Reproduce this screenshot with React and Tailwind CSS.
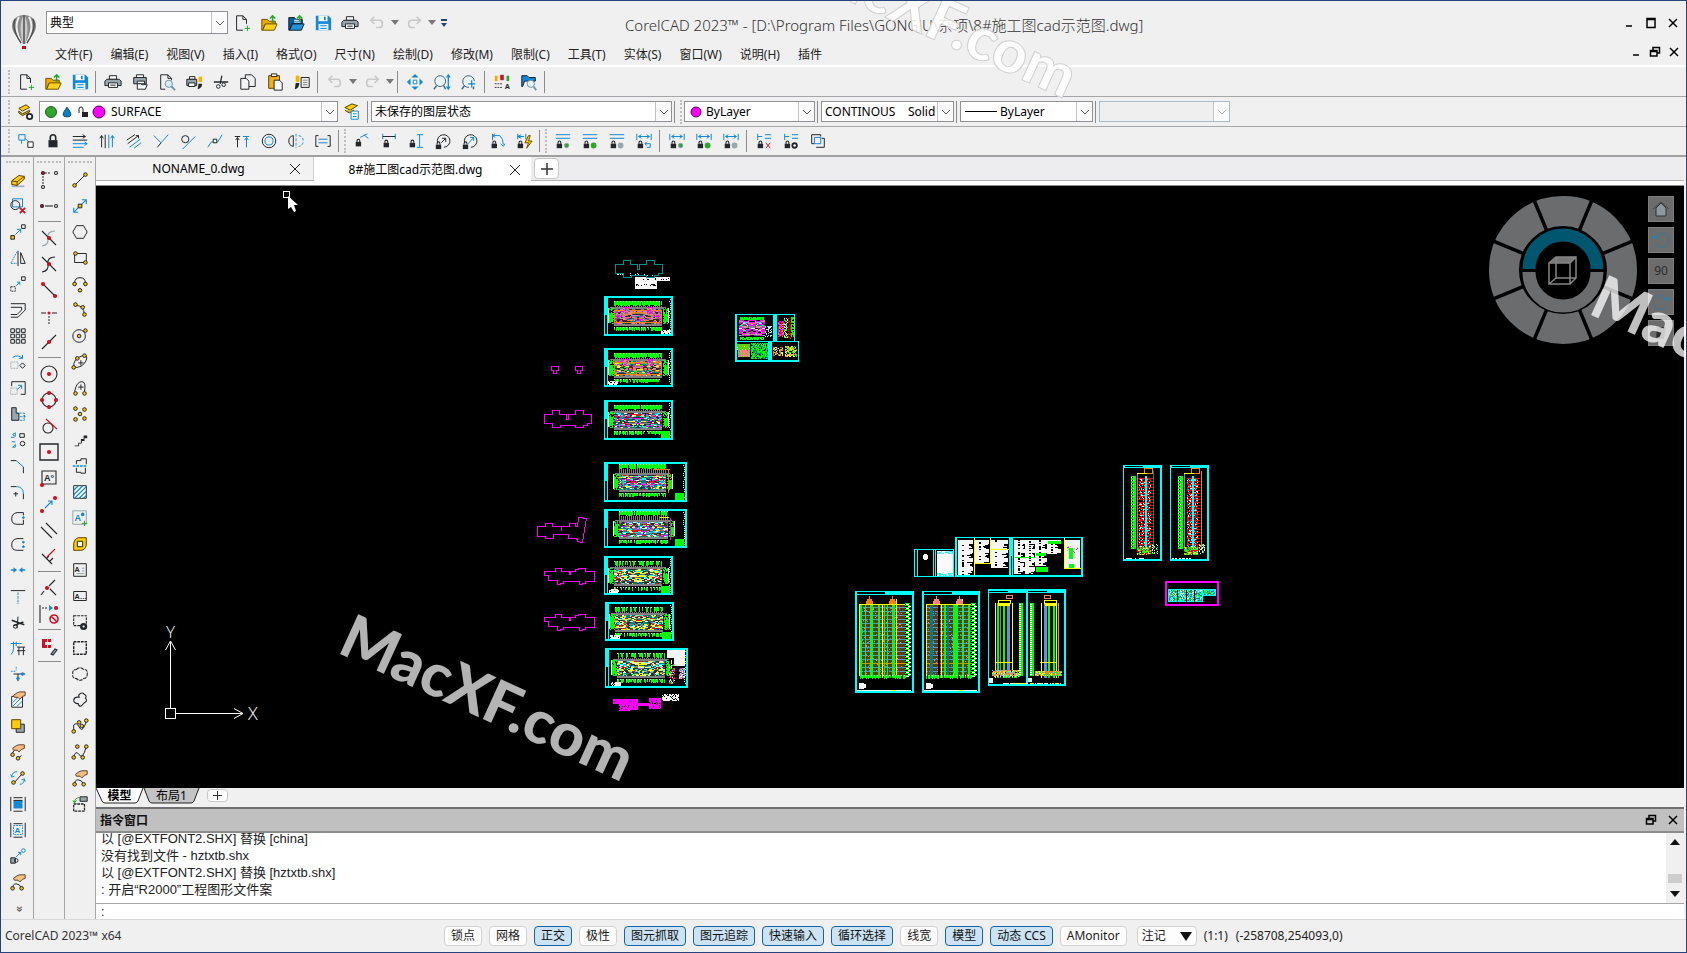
import React from "react";

const K = "#23272b";
const B = "#1488d8";
const Y = "#f7c600";
const G = "#2ea52f";
const R = "#d01224";
const S = "#98a6ae";
const D = "#c9c9c9";

const circ = (x, y, r) => `M${x - r} ${y}a${r} ${r} 0 1 0 ${2 * r} 0a${r} ${r} 0 1 0 ${-2 * r} 0z`;
const rect = (x, y, w, h) => `M${x} ${y}h${w}v${h}h${-w}z`;
const dot = (x, y) => [K, circ(x, y, 2), Y];
const red = (x, y) => [R, circ(x, y, 1.5), R];
const lock = (x, y) => [
  ["none", rect(x, y + 3, 6, 5), K],
  [K, `M${x + 1.5} ${y + 3}v-1.500q0-1.500 1.500-1.500t1.500 1.500v1.500`, 0, 1.2],
];
const hand = (x, y) => ["#5b4530", `M${x} ${y + 4}l4-3 3-1h6v4l-3 1-3 3-2-2h-4z`, "#f3bd84"];

/* Each stroke: [stroke, path, fill, width, dash]; a { t } entry is a letter. */
const ICONS = {
  new: [[K, "M11 18H4V2h7l4 4v5M11 2v4h4"], [G, "M16 13v6M13 16h6"]],
  open: [["#6b5200", "M2 6h6l2 2h7v4H5l-2 6H2z", "#f0a800"], ["#6b5200", "M6 11h13l-3 7H3z", "#ffd21f"], [G, "M14 10V2M11 5l3-3 3 3", 0, 1.800]],
  openBlue: [["#123", "M2 4h6l2 2h7v5H5l-2 7H2z", "#0a5fa0"], ["#fff", "M8 7h7M8 9h7"], ["#123", "M6 11h13l-3 7H3z", "#1c95dc"], [G, "M14 9V2M11 5l3-3 3 3", 0, 1.800]],
  save: [["none", "M2 2h14l3 3v13H2z", B], ["none", rect(5, 2, 10, 6), "#fff"], ["none", rect(11, 3, 2, 4), B], ["none", rect(5, 11, 11, 7), "#e6f3fb"], [B, "M7 13h7M7 16h7"]],
  print: [[K, rect(6, 3, 8, 4), "#fff"], [K, "M3 7h14l2 2v5H1V9z", S], [K, rect(5, 11, 10, 5), "#fff"], [K, "M7 13.500h6"]],
  printSet: [[K, rect(6, 2, 8, 3), "#fff"], [K, "M3 5h14v7H3z", S], [K, "M7 9h8v3H7z", "#fff"], [K, "M7 12h4l1 1h6l-2 5H7z", "#fff"]],
  preview: [[K, "M8 18H3V2h8l4 4v2M11 2v4h4"], ["#7192a8", circ(12, 12, 4), "#d9edf8"], ["#7192a8", "M15 15l4 4", 0, 2]],
  printBrush: [[K, rect(5, 4, 6, 3), "#fff"], [K, "M2 7h11v7H2z", S], [K, rect(4, 11, 7, 4), "#fff"], ["none", rect(15, 4, 4, 6), "#f7b500"], ["none", "M15 12h4q0 5-5 6z", K]],
  cut: [[K, "M2 10h16M11 3l-2 9", 0, 1.400], [K, circ(7, 15, 2)], [K, circ(13, 13, 2)]],
  copy: [[K, "M7 6V2h7l4 4v9h-7"], [K, "M2 6h6l3 3v9H2z", "#f4f4f4"]],
  paste: [["#5a4300", rect(3, 3, 12, 14), "#f3b01b"], [K, rect(6, 1, 6, 3), "#fff"], [K, "M9 8h6l3 3v8H9z", "#fff"]],
  match: [["none", rect(3, 3, 4, 7), "#f7b500"], ["none", "M3 11h4q0 6-5 7z", K], [K, rect(9, 5, 9, 11)], ["#888", "M11 8h5M11 10.500h5M11 13h5"]],
  undo: [[D, "M7 3L3 7l4 4M3 7h10q3 0 3 4t-3 4H9", 0, 1.800]],
  redo: [[D, "M13 3l4 4-4 4M17 7H7q-3 0-3 4t3 4h4", 0, 1.800]],
  pan: [["none", "M10 1l4 4H6zM10 19l4-4H6zM1 10l4-4v8zM19 10l-4-4v8z", B], [B, rect(8, 8, 4, 4), "#fff"]],
  zoomDyn: [["#466577", circ(8, 9, 6), "#eaf5fb"], ["#466577", "M4 14l-3 4M12 14l2 4", 0, 1.600], [B, "M17 3v14M15 5l2-3 2 3M15 15l2 3 2-3", 0, 1.400]],
  zoomWin: [["#466577", "M16 9a6.500 6.500 0 1 0-6 7", "#eaf5fb"], ["#466577", "M5 14l-3 4M15 15v3", 0, 1.600], [B, "M9 12h8M13 8v8", 0, 1.400]],
  props: [["none", rect(2, 3, 3, 6), "#f7a500"], ["none", rect(8, 2, 4, 6), R], ["none", rect(15, 3, 3, 6), G], [K, "M2 12h9M2 16h9", 0, 1, "2 1"], { t: "A", x: 13, y: 18, s: 8, c: K }],
  find: [["#123", "M2 3h6l2 2h7v4H5l-2 6H2z", B], ["#7192a8", circ(12, 12, 4), "#e6f4fb"], ["#7192a8", "M15 15l3 4", 0, 2]],
  layers: [["#5a4300", "M2 6l8-4 4 3-8 4z", "#fc0"], ["#5a4300", "M2 9l4 3 8-4v2l-8 4-4-3z", "#e8ac00"], [K, circ(14, 15, 3), "#fff", 2]],
  layerState: [["#5a4300", "M2 5l8-4 6 2-8 5z", "#fc0"], ["#5a4300", "M2 8l5 3 5-3", "#e8ac00"], [B, rect(9, 9, 8, 9), "#fff"], [B, "M11 12h4M11 15h4"]],
  block: [[B, rect(2, 3, 7, 6)], [B, "M5 9v4M9 7l4 4", 0, 1], [K, rect(12, 11, 6, 6), "#fff"]],
  lock: [[K, "M7 9V6q0-3 3-3t3 3v3", 0, 1.800], ["none", rect(5, 9, 10, 8), K]],
  parH: [[K, "M2 5h14M2 9h16M13 3l3 2-3 2"], [B, "M2 13h16M2 17h12M15 11l3 2-3 2"]],
  parV: [[K, "M4 4v13M8 3v15M2 7l2-3 2 3"], [B, "M12 3v15M16 4v13M14 7l2-3 2 3"]],
  diag: [[K, "M2 9l9-6M3 13l12-9M12 4h3v3"], [B, "M5 17l12-9M10 18l8-6"]],
  perp: [[B, "M2 4l8 8 8-9"], [K, "M10 12l-4 5"]],
  tang: [[K, circ(7, 8, 4)], [B, "M4 19L18 5"]],
  smooth: [[B, "M2 17l4-6h7l5-8"], [K, rect(8, 8, 4, 4), "#fff"]],
  sym: [[K, "M2 5h6M5 7v10M3 9l2-3 2 3"], [B, "M11 5h7M15 7v10M13 9l2-3 2 3"]],
  conc: [[K, circ(10, 10, 7.500)], [B, circ(10, 10, 4.500)]],
  mirr: [[K, "M7 4q-5 1-5 6t5 6z", 0], [B, "M13 4q5 1 5 6t-5 6M10 2v16", 0, 1, "3 2"]],
  eq: [[K, "M5 4H2v12h3M15 4h3v12h-3"], [B, "M5 8h10M5 12h10"]],
  dimA: [[B, "M8 6l8-4M12 3l5 4"], ...lock(3, 8)],
  dimH: [[B, "M3 2v6M17 2v6"], [K, "M3 5h14"], ...lock(4, 9)],
  dimV: [[B, "M11 3h7M11 17h7M14 3v14"], ...lock(3, 9)],
  dimR: [[K, "M4 12a7 7 0 1 1 7 5M8 12l5-5M9 7h4v4"], ...lock(2, 11)],
  dimD: [[K, "M4 12a7 7 0 1 1 7 5"], [B, "M8 13l6-7M10 6h4v4"], ...lock(2, 11)],
  dimG: [[B, "M5 2v7M5 4h8q4 3 4 10M8 2l-3 2 3 2M14 13l3 3 2-3"], ...lock(4, 10)],
  dimZ: [[B, "M3 2v6M3 5h7M7 3l-4 2 4 2M12 2v6"], ...lock(3, 10), ["#6b5200", "M15 4l-4 8h4l-2 6 6-8h-4l2-6z", "#fc0"]],
  cH: [[B, "M2 3h16M2 7h16"], ...lock(3, 10), [S, circ(14, 15, 2.500), G]],
  cG: [[B, "M2 3h16M2 7h16"], ...lock(3, 10), ["none", circ(14, 15, 3.200), G]],
  cS: [[B, "M2 3h16M2 7h16"], ...lock(3, 10), ["none", circ(14, 15, 3.200), S]],
  dU: [[B, "M2 2v7M18 2v7M4 5h12M7 3L4 5l3 2M13 3l3 2-3 2"], ...lock(3, 10), [B, "M13 11l-2 2 2 2M11 13h6v4h-4"]],
  dH: [[B, "M2 2v7M18 2v7M4 5h12M7 3L4 5l3 2M13 3l3 2-3 2"], ...lock(3, 10), [S, circ(14, 15, 2.500), G]],
  dG: [[B, "M2 2v7M18 2v7M4 5h12M7 3L4 5l3 2M13 3l3 2-3 2"], ...lock(3, 10), ["none", circ(14, 15, 3.200), G]],
  dS: [[B, "M2 2v7M18 2v7M4 5h12M7 3L4 5l3 2M13 3l3 2-3 2"], ...lock(3, 10), ["none", circ(14, 15, 3.200), S]],
  xDel: [[B, "M3 2v7M3 5h5M11 3h7M11 7h7"], ...lock(3, 10), [R, "M12 12l5 6M17 12l-5 6"]],
  xSet: [[B, "M3 2v7M3 5h5M11 3h7M11 7h7"], ...lock(3, 10), [K, circ(14, 15, 2.500), "#fff", 2]],
  xInf: [[K, "M6 13H3V3h10v2M8 17h9V7h-3"], [B, rect(6, 6, 7, 7)]],
  erase: [["none", "M3 16h14v2H3z", "#9db3c4"], ["#5a4300", "M3 11l8-6 6 1v3l-8 7-6-1z", "#fc0"], ["#5a4300", "M3 11l6 1 8-6M9 12v4"]],
  dup: [[B, rect(4, 2, 11, 9)], [K, circ(7, 9, 5)], [R, "M12 12l6 6M18 12l-6 6", 0, 2]],
  copyE: [[K, rect(2, 14, 4, 4), Y], [K, rect(14, 2, 4, 4)], [B, "M7 13l6-6M9 7h4v4"]],
  mirror: [[B, "M9 3L2 16h7", 0, 1, "2 1"], [K, "M10 2v17M13 4l5 12h-5z"]],
  move: [[K, rect(2, 13, 5, 5), 0, 1, "2 1"], [K, rect(14, 2, 4, 4)], [B, "M8 12l4-4M9 8h3v3"]],
  offset: [[K, "M2 3h16v7l-8 8H2M2 7h12v3l-5 5H2"]],
  array: [[K, [2, 8, 14].map((y) => [2, 8, 14].map((x) => rect(x, y, 4, 4)).join("")).join("")]],
  rotate: [[B, "M4 5q6-4 11 1M15 2v4h-4"], [S, rect(2, 10, 8, 7), 0, 1, "2 1"], [K, "M15 11l3 3-3 3-3-3z"]],
  scale: [[K, "M3 8V3h15v14h-5"], [S, rect(2, 10, 7, 7), 0, 1, "2 1"], [B, "M9 12l5-5M10 7h4v4"]],
  stretch: [[K, "M3 3h5v6h3v8H3z", S], [B, "M11 9h6v8h-6M12 13h6M16 11l2 2-2 2", 0, 1, "3 1"]],
  editC: [[B, "M4 4l3-2v4zM4 18l3-3v3zM2 7h4M3 12h4"], [K, rect(12, 3, 5, 4)], [K, circ(15, 14, 2.500)]],
  chamf: [[B, "M8 4l8 7"], [K, "M2 4h6M16 11v7"]],
  fillet: [[B, "M8 4q8 0 8 8"], [K, "M2 4h6M16 12v6M5 12h5M7.500 10v5"]],
  spl1: [[K, "M16 4H9q-6 1-6 7t6 6h7M16 4v3M16 12v5"], [B, circ(16, 9.500, 1), B]],
  spl2: [[K, "M16 4H9q-6 1-6 7t6 6h7"], [B, circ(16, 8, 1) + circ(16, 13, 1), B]],
  weld: [["none", "M9 10L5 7v6zM11 10l4-3v6z", B], [B, "M2 10h4M14 10h4", 0, 1.400]],
  trim: [[K, "M2 4h16"], [B, "M10 6v13", 0, 1, "3 1"]],
  scis: [[K, "M3 8l14 5M5 14l11-4", 0, 1.600], [K, "M10 4l-1 13"], [K, circ(7, 15, 2)]],
  ext: [[B, "M2 5h12M5 3v6q0 7-3 8M8 3v5"], [K, "M9 9h9M11 9v9M16 9v9M9 13h9"]],
  brk: [[B, "M2 7h6M8 2v4", 0, 1, "2 1"], [K, "M5 10h13M10 10v8"], [B, circ(15, 10, 1.500), B], [B, circ(10, 15, 1.500), B]],
  hEdit: [[K, rect(3, 6, 12, 12), "#fff"], [B, "M4 13l6-6M4 17L14 7M9 17l6-6"], hand(5, 1)],
  front: [[K, rect(8, 8, 9, 9), S], ["#5a4300", rect(3, 3, 10, 10), "#fc0"]],
  pEdit: [[K, "M3 12l3-4M10 17l4-3"], dot(4, 13), dot(10, 17), hand(4, 2)],
  swap: [[B, "M3 8q1-5 6-5M2 6l1 3 3-1M17 12q-1 5-5 5M18 14l-1-3-3 1"], [K, "M6 15l8-9"], dot(5, 15), dot(15, 5)],
  blueB: [["none", rect(5, 6, 10, 9), B], [K, "M2 2v16M18 2v16M5 3h10M5 18h10M5 6h10"]],
  aB: [[K, "M2 2v16M18 2v16M5 3h10M5 18h10"], [B, rect(5, 5, 10, 10), 0, 1, "2 1"], { t: "A", x: 6, y: 13, s: 9, c: B }],
  align: [[K, rect(2, 12, 5, 6), S], [K, circ(8, 15, 2)], [B, "M8 11l5-5M10 6h3v3"], [B, circ(16, 4, 2)]],
  handS: [[K, "M4 17q0-5 4-5t6 5"], dot(4, 17), dot(14, 17), hand(5, 2)],
  trk: [[K, "M6 3h6M4 6v8", 0, 1, "2 1"], [K, circ(4, 3, 1.500), R], [K, circ(17, 3, 1.500)], [K, circ(4, 17, 1.500)]],
  mid2: [[K, "M6 10h8"], [K, circ(3, 10, 1.500), R], [K, circ(17, 10, 1.500)]],
  int1: [[S, "M16 3q-8 0-7 7t-6 8"], [K, "M3 3l14 14"], red(10, 10)],
  int2: [[K, "M16 3q-8 0-7 7t-6 8M3 3l14 14"], red(10, 10)],
  endp: [[K, "M4 4l12 12"], red(4, 4), red(16, 16)],
  midp: [[K, "M2 7h5M13 7h5"], [K, "M10 10v9", 0, 1, "2 1"], [R, circ(10, 7, 1), R]],
  near: [[K, "M3 17L17 3"], red(10, 10)],
  cen: [[K, circ(10, 10, 8)], red(10, 10)],
  quad: [[K, circ(10, 10, 7)], red(10, 3), red(10, 17), red(3, 10), red(17, 10)],
  tan: [[K, circ(9, 12, 5)], [R, "M7 3l11 10"]],
  node: [[K, rect(1, 2, 18, 16), 0, 1.400], red(10, 10)],
  ins: [[K, rect(3, 3, 14, 13)], { t: "A°", x: 5, y: 13, s: 9, c: K }, red(3, 17)],
  from: [[B, "M6 14l7-7M9 7h4v4"], red(3, 17), red(16, 4)],
  par: [[K, "M2 7l11 11M7 3l11 11"]],
  prp: [[K, "M3 8l10 10M10 10l-3 3M14 12l-4 4"], [R, "M16 3l-8 8"]],
  app: [[K, "M16 2l-6 6M5 13l-3 4M11 11l6 6"], red(8, 10)],
  none: [[K, "M1 1v18"], [K, "M3 4h6", 0, 1, "2 1"], ["none", "M10 1l4 3-4 3z", B], red(17, 4), [R, circ(15, 15, 4) + "M12 12l6 6", 0, 1.600]],
  snap: [["none", "M3 3h5v3H6v3h2v3H3zM9 3h3v3H9zM9 9h3v3H9z", R], [K, "M12 18l4-5 2 1-4 5z", S]],
  line: [[K, "M5 15L15 5"], dot(4, 16), dot(16, 4)],
  xline: [[B, "M3 17L17 3M3 12v5h5M12 3h5v5", 0, 1.200], [K, rect(8, 8, 4, 4), Y]],
  hex: [[K, "M6 3h8l4 7-4 7H6l-4-7z"]],
  rec: [[K, rect(4, 5, 13, 10)], dot(5, 5), dot(16, 15)],
  arc3: [[K, "M4 9q0-6 6-6t6 6"], dot(4, 10), dot(16, 10), dot(10, 17)],
  pl: [[K, "M6 5q8 0 9 10"], dot(5, 4), dot(13, 7), dot(15, 15)],
  cir: [[K, circ(9, 10, 7)], dot(9, 10), dot(16, 4)],
  ell: [[K, "M3 16q-1-10 10-13q6-1 4 5q-4 9-14 8z"], dot(3, 16), dot(15, 3), dot(7, 6), [K, "M8 11h6M11 8v6"]],
  earc: [[K, "M4 14q2-11 8-11q5 0 3 11M8 9h6M11 6v6"], dot(5, 16), dot(15, 16)],
  pts: [dot(5, 4), dot(15, 5), dot(10, 10), dot(5, 16), dot(15, 15)],
  stair: [["none", "M4 16h4v-3h3v-4h3V5h4v3h-3v3h-3v3H9v3H4z", K]],
  brkl: [[K, "M6 8V4h5V2h6v6M6 12v5h5v1h5v-6"], [B, "M2 10h16", 0, 1.400, "3 1"]],
  hatch: [[K, rect(3, 3, 14, 14), "#fff"], [B, "M3 8l5-5M3 13L13 3M4 17L17 4M9 17l8-8M14 17l3-3", 0, 1.400]],
  aNew: [[S, rect(2, 2, 15, 15)], { t: "A", x: 4, y: 13, s: 10, c: B }, ["none", circ(13, 6, 2), B], [G, "M15 13v6M12 16h6"]],
  ring: [["#5a4300", "M8 3h9v8q-1 6-6 6H3V9q1-5 5-6z", "#fc0"], [K, rect(7, 7, 6, 6), "#fff"]],
  mtext: [[K, rect(3, 3, 14, 14)], { t: "A", x: 4, y: 12, s: 8, c: K }, [S, "M12 8h3M12 11h3M6 14h9"]],
  text: [[K, rect(3, 5, 14, 10)], { t: "A…", x: 4, y: 13, s: 8, c: K }],
  cldG: [[K, rect(3, 3, 14, 11), 0, 1.200, "3 1"], ["none", circ(14, 15, 4), K], ["none", circ(14, 15, 1.200), "#fff"]],
  cldR: [[K, rect(3, 3, 14, 14), 0, 1.600, "3 1"]],
  cldE: [[K, "M6 5q4-4 8 0q5 0 4 5q0 5-4 5q-4 4-8 0q-5 0-4-5q-1-5 4-5z", 0, 1.200, "4 1"]],
  cldF: [[K, "M10 3q3-2 5 1q3 1 1 4q3 3-1 5l-4 4q-3 0-3-3q-5 0-5-4q1-4 6-3q-1-3 1-4z", 0, 1.200]],
  spl: [[K, "M3 16V9q3-4 6 2t6-1q2-3 2-7"], dot(3, 16), dot(9, 6), dot(12, 10), dot(17, 4)],
  spf: [[K, "M3 16q2-9 6-3t8-9"], dot(3, 16), dot(7, 4), dot(17, 4), dot(13, 16)],
  cldB: [[G, "M9 3q-5 0-5 5M2 6l2 3 2-3"], [K, rect(10, 2, 8, 5), S], [K, rect(3, 10, 12, 8), 0, 1.400, "3 1"]],
};

function Icon({ name, size = 18 }) {
  return (
    <svg width={size} height={size} viewBox="0 0 20 20" fill="none" className="shrink-0" aria-hidden="true">
      {ICONS[name].map((s, i) =>
        Array.isArray(s) ? (
          <path key={i} d={s[1]} stroke={s[0]} fill={s[2] || "none"} strokeWidth={s[3] || 1.1} strokeDasharray={s[4]} />
        ) : (
          <text key={i} x={s.x} y={s.y} fontSize={s.s} fill={s.c} fontWeight="700" fontFamily="Liberation Sans, sans-serif">{s.t}</text>
        )
      )}
    </svg>
  );
}

const Tool = ({ name }) => (
  <button type="button" aria-label={name} className="flex h-[26px] w-[27px] shrink-0 items-center justify-center hover:bg-[#d8e8f6]">
    <Icon name={name} />
  </button>
);
const VTool = ({ name, size }) => (
  <button type="button" aria-label={name} className="flex h-[26px] w-[28px] shrink-0 items-center justify-center hover:bg-[#d8e8f6]">
    <Icon name={name} size={size} />
  </button>
);
const Sep = () => <div className="ml-[2px] mr-[3px] h-[22px] w-px shrink-0 bg-[#8c8c8c]" />;
const Grip = () => <div className="mx-[2px] h-6 w-0 shrink-0 border-l-2 border-dotted border-[#bdbdbd]" />;
const Drop = () => (
  <button type="button" aria-label="more" className="flex w-[10px] shrink-0 justify-center">
    <svg width="8" height="5" viewBox="0 0 8 5"><path d="M0 0h8L4 5z" fill="#777" /></svg>
  </button>
);

function Combo({ label, value, className, children, disabled }) {
  return (
    <div className={`flex shrink-0 items-center border ${disabled ? "border-[#a9bccb] bg-[#efefef]" : "border-[#8f9296] bg-white"} ${className}`}>
      {children}
      <select aria-label={label} disabled={disabled} className="h-full min-w-0 flex-1 appearance-none bg-transparent pl-[3px] text-[12px] leading-4 text-black outline-none">
        <option>{value}</option>
      </select>
      <div className="pointer-events-none flex h-full w-4 shrink-0 items-center justify-center border-l border-[#c4c4c4] bg-[#fbfbfb]">
        <svg width="10" height="6" viewBox="0 0 10 6" fill="none"><path d="M1 1l4 4 4-4" stroke={disabled ? "#b5b5b5" : "#555"} /></svg>
      </div>
    </div>
  );
}

/* Pixel art of the drawing sheets, gathered in one path for each colour. */
function buildDrawing() {
  const layers = [];
  let seed = 7;
  const rnd = () => ((seed = (seed * 16807) % 2147483647) / 2147483647);
  const px = (c, x, y, w = 1, h = 1) => {
    const last = layers[layers.length - 1];
    const d = `M${x} ${y}h${w}v${h}h${-w}z`;
    if (last && last.c === c) last.d.push(d);
    else layers.push({ c, d: [d] });
  };
  const pick = (a) => a[Math.floor(rnd() * a.length)];
  const C = "#00ffff", N = "#00ff00", W = "#f4f4f4", M = "#ff00ff", GY = "#808080", O = "#ff7f00", YE = "#ffff00", P = "#ff7f7f", TE = "#007f7f", RD = "#ff0000", BL = "#5f8fdf";
  const noise = (pal, x, y, w, h, d = 0.85) => {
    for (let j = 0; j < h; j++) for (let i = 0; i < w; i++) if (rnd() < d) px(pick(pal), x + i, y + j);
  };
  const frame = (c, x, y, w, h, t = 1) => {
    px(c, x, y, w, t); px(c, x, y + h - t, w, t); px(c, x, y, t, h); px(c, x + w - t, y, t, h);
  };
  const comb = (x, y, w, h, d) => {
    for (let i = 0; i < w; i++) if (rnd() < d) px(N, x + i, y, 1, h - Math.floor(rnd() * 2));
    for (let i = 0; i < w; i += 3) px(W, x + i, y);
  };
  /* Rooms: symmetric blobs, so the two halves of a storey mirror each other. */
  const rooms = (pal, x, y, w, h) => {
    const half = Math.ceil(w / 2);
    for (let j = 0; j < h; j++) {
      for (let i = 0; i < half; ) {
        const run = 1 + Math.floor(rnd() * 3);
        if (rnd() < 0.8) {
          const c = pick(pal);
          px(c, x + i, y + j, Math.min(run, half - i), 1);
          px(rnd() < 0.8 ? c : pick(pal), x + Math.max(half, w - i - run), y + j, Math.min(run, w - half), 1);
        }
        i += run;
      }
    }
  };
  const sheet = (x, y, w, h, pal, o = {}) => {
    frame(C, x, y, w, h); px(C, x, y, w, 2); px(C, x, y + h - 2, w, 2);
    px(C, x, y, 4, 19); px(C, x + 3, y, 1, h); px(C, x + w - 2, y, 2, h);
    for (let j = 3; j < h - 3; j += 2) px(pick([W, YE, W]), x + w - 4 + (rnd() > 0.5 ? 1 : 0), y + j, 1, 1);
    const a = o.a || 10, b = o.b || 58, top = o.top || 5;
    comb(x + a, y + top, b - a, 5, o.d || 0.95);
    for (let i = a; i < b; i++) if (i % 2) px(GY, x + i, y + top + 5, 1, 5);
    px(GY, x + a - 4, y + 11, b - a + 8, 2);
    noise([N, "#000", N], x + a - 5, y + 12, 5, 16, 0.9);
    noise([N, "#000", N], x + b + 1, y + 12, 5, 16, 0.9);
    px(N, x + a - 5, y + 17, 4, 9); px(N, x + b + 2, y + 18, 4, 8);
    px(W, x + a - 6, y + 12, 1, 15); px(W, x + b + 6, y + 12, 1, 15);
    px("#2a2a2a", x + a, y + 13, b - a, 15);
    rooms(pal, x + a, y + 13, b - a, 15);
    if (o.orange) { frame(O, x + a, y + 14, b - a, 13); px(M, x + a + 9, y + 11, 6, 7); px(M, x + b - 15, y + 11, 6, 7); noise([P, GY], x + a + 9, y + 12, 6, 6, 0.6); noise([P, GY], x + b - 15, y + 12, 6, 6, 0.6); }
    px(GY, x + a, y + 28, b - a, 2);
    comb(x + a, y + 31, b - a, 4, o.d2 || 0.8);
    if (o.corner) px(N, x + w - 12, y + h - 9, 9, 7);
    if (o.note) noise([W], x + o.note, y + h - 6, 10, 4, 0.8);
  };
  const warm = [M, P, O, GY, P, TE, GY, "#d070d0"];
  const cool = [C, W, TE, M, BL, GY, RD, YE, TE];
  const mix = [RD, YE, TE, C, YE, W, TE, GY];
  sheet(604, 296, 69, 40, warm, { orange: 1, note: 57 });
  sheet(604, 348, 69, 39, [...warm, YE, N, TE], { orange: 1, note: 4 });
  sheet(604, 400, 69, 40, cool, { corner: 1 });
  sheet(604, 462, 83, 40, cool, { a: 15, b: 62, top: 2, corner: 1 });
  px(O, 654, 469, 16, 1); px(O, 668, 469, 1, 24);
  sheet(604, 509, 83, 39, cool, { a: 15, b: 64, top: 2, corner: 1 });
  px(YE, 660, 517, 9, 1); px(M, 670, 518, 1, 22);
  sheet(604, 556, 69, 39, mix, { d: 0.6, d2: 0.5, corner: 1, note: 5 });
  sheet(605, 602, 69, 39, mix, { d: 0.6, d2: 0.6, corner: 1, note: 5 });
  sheet(605, 648, 83, 40, mix, { a: 12, b: 60, d: 0.6, d2: 0.6, note: 6 });
  px(W, 667, 650, 18, 8); px(W, 674, 658, 11, 8);
  noise([RD, N, M, W, "#000"], 669, 664, 6, 20, 0.7); noise([P, W, M, C], 679, 668, 6, 11, 0.8);
  px(W, 635, 277, 22, 12); px(W, 656, 277, 14, 4); noise(["#000"], 636, 278, 33, 2, 0.2); noise(["#000"], 636, 284, 20, 2, 0.4);
  noise([W, "#000"], 616, 273, 44, 3, 0.25);
  noise([M], 613, 699, 17, 5, 0.9); noise([M], 619, 702, 11, 9, 0.85); noise([M], 629, 699, 9, 11, 0.9); noise([M], 638, 703, 11, 3, 1); noise([M], 649, 698, 12, 11, 0.9);
  noise([W], 662, 694, 17, 7, 0.75);
  // Detail sheet
  frame(C, 735, 314, 60, 28, 1); px(C, 735, 314, 2, 48); px(C, 773, 314, 4, 28); px(C, 794, 314, 1, 28);
  px(C, 735, 341, 64, 1); px(C, 735, 360, 64, 2); px(C, 798, 342, 1, 20); px(C, 768, 342, 4, 20);
  noise([N], 740, 317, 24, 3, 0.9); rooms([M, P, C, W, TE, M, GY, M], 739, 320, 26, 16); noise([N], 740, 337, 24, 3, 0.8);
  noise(["#7fdfff", W], 765, 326, 7, 11, 0.5); noise([M, RD, P], 778, 321, 6, 16, 0.9); noise([W, N], 784, 318, 4, 20, 0.5); noise([RD, "#800000"], 788, 318, 3, 21, 0.9); noise([N], 791, 317, 3, 20, 0.7);
  px("#66d000", 737, 344, 13, 6); noise([W, N], 737, 344, 13, 6, 0.15); px(P, 738, 350, 12, 7); noise([GY, N], 738, 350, 12, 7, 0.15); noise([N, TE, N], 751, 343, 17, 16, 0.85); noise([YE, O, GY], 773, 347, 10, 9, 0.7); noise([P, YE, N], 785, 346, 12, 11, 0.75);
  // Note sheets
  frame(C, 914, 549, 40, 28); px(C, 917, 549, 1, 28); px(C, 933, 549, 1, 28); px(C, 935, 549, 1, 28);
  px("#fafafa", 937, 551, 16, 25); noise([C], 937, 551, 16, 3, 0.5); noise([C], 937, 573, 16, 3, 0.5); px(W, 923, 555, 5, 4); px(W, 924, 554, 3, 6);
  frame(C, 955, 537, 128, 40, 1); px(C, 955, 537, 2, 40); px(C, 955, 575, 128, 2); px(C, 1009, 537, 4, 40); px("#000", 1011, 556, 1, 19); px(C, 1081, 537, 2, 40);
  [[958, 15, 35], [975, 14, 23], [991, 17, 28], [1014, 11, 34], [1025, 10, 34], [1035, 12, 26], [1047, 14, 14]].forEach(([x, w, n]) => {
    for (let j = 0; j < n; j++) {
      const l = Math.floor(w * (0.6 + rnd() * 0.4));
      px(W, x, 540 + j, j % 9 < 4 ? w : l, 1);
      if (rnd() < 0.35) px("#000", x + 4, 540 + j, 2, 1);
    }
  });
  px(YE, 974, 538, 1, 38); px(YE, 990, 538, 1, 26); px(YE, 974, 563, 17, 1); px(YE, 991, 549, 18, 1);
  px(N, 1048, 541, 13, 3); px(N, 1036, 553, 10, 3); px(N, 1036, 567, 12, 5); px(N, 1015, 557, 20, 1);
  px(W, 1065, 540, 15, 28); noise(["#bbb", M], 1067, 546, 12, 7, 0.25); px(N, 1069, 548, 4, 11); px(N, 1069, 564, 5, 4); px(YE, 1064, 538, 1, 31); px(YE, 1064, 568, 17, 1);
  // Elevations
  const elev = (x, y, w, pk, cols) => {
    frame(C, x, y, w, 102, 2); px(C, x, y, w, 4); px("#000", x + 2, y + 1, 28, 2);
    px("#5a3c10", x + 5, y + 14, w - 14, 71);
    for (let j = 16; j < 84; j += 4) px(BL, x + 5, y + j, w - 12, 1);
    noise([BL, P, "#5a3c10", TE], x + 6, y + 16, w - 18, 68, 0.14);
    px(YE, x + 4, y + 13, w - 13, 1); px(O, x + 4, y + 72, w - 13, 1);
    px(YE, x + 4, y + 13, 1, 72); px(YE, x + w - 18, y + 8, 1, 76);
    cols.forEach(([c, cx, cw]) => px(c, x + cx, y + 14, cw, 73));
    [14, 37].forEach((i) => { px(pk, x + i - 3, y + 10, 7, 3); px(pk, x + i - 2, y + 8, 5, 3); px(pk, x + i, y + 5, 1, 3); });
    for (let j = 12; j < 86; j += 2) { px(N, x + w - 9, y + j, 5, 1); px(W, x + w - 8 + (j % 4), y + j + 1, 3, 1); }
    comb(x + 4, y + 84, w - 12, 4, 0.6); px(W, x + 4, y + 92, 5, 6); px(W, x + 5, y + 93, 6, 4);
    px(W, x + 2, y + 99, w - 5, 1); px(YE, x + 36, y + 99, 5, 1);
  };
  elev(855, 591, 59, O, [[N, 5, 2], [N, 10, 1], [N, 15, 3], [N, 23, 2], [YE, 27, 1], [N, 29, 1], [N, 32, 1], [N, 37, 3], [YE, 41, 1]]);
  elev(922, 591, 58, P, [[YE, 4, 1], [TE, 8, 3], ["#000", 16, 2], [YE, 19, 1], [N, 22, 2], [TE, 25, 2], [N, 31, 5], [N, 40, 2], [N, 46, 2]]);
  frame(C, 988, 589, 78, 97, 1); px(C, 988, 589, 78, 4); px("#000", 989, 591, 19, 1); px("#000", 1028, 591, 19, 1); px(C, 1026, 589, 2, 97); px(C, 988, 684, 78, 2); px(C, 1064, 589, 2, 97);
  [[995, YE, 1], [997, N, 2], [1000, GY, 1], [1003, N, 2], [1007, BL, 3], [1012, YE, 1], [1041, YE, 1], [1044, BL, 3], [1048, N, 2], [1053, N, 2], [1056, YE, 1], [1058, P, 1]].forEach(([x, c, w]) => px(c, x, 603, w, 75));
  px(YE, 998, 604, 12, 2); px(YE, 1045, 604, 12, 2); frame(P, 1006, 595, 7, 4); frame(P, 1044, 595, 7, 4); frame(YE, 998, 600, 13, 4); frame(YE, 1044, 600, 13, 4);
  for (let j = 603; j < 676; j++) { px(j % 2 ? N : W, 1019, j, 2, 1); px(N, 1021, j, 2, 1); px(j % 2 ? N : W, 1030, j, 2, 1); px(N, 1032, j, 2, 1); }
  noise([O, C, P, YE], 992, 670, 27, 6, 0.9); noise([N, O, YE, "#b080ff"], 1035, 671, 27, 5, 0.9); px(YE, 995, 662, 18, 1); px(YE, 1040, 662, 17, 1);
  comb(994, 676, 26, 2, 0.6); px(W, 989, 678, 4, 5); px(W, 1028, 678, 4, 4); noise([W, YE], 1003, 683, 58, 1, 0.7);
  // Sections
  const sect = (x, o) => {
    frame(C, x, 465, 39, 96, 1); px(C, x, 465, 39, 3); px("#000", x + 2, 466, 18, 1); px(C, x, 559, 39, 2); px(C, x + 37, 465, 2, 96);
    px(N, x + 10, 477, 3, 71);
    for (let j = 476; j < 549; j++) { if (j % 3) px(N, x + 8, j, 5, 1); else px(W, x + 8, j, 1, 1); if (j % 4 === 0) px(W, x + 10, j, 1, 1); }
    for (let j = 478; j < 552; j += 3) { px(RD, x + 14 + 3 * o, j, 16 - 3 * o, 1); noise([C, W, RD, TE], x + 16 + o, j + 1, 12 - o, 2, 0.6); }
    px(BL, x + 14, 474, 1, 76); px(C, x + 22, 476, 2, 74); px(o ? O : TE, x + (o ? 31 : 30), 471, 1, 78);
    frame(O, x + 21, 468, 9, 6); px(YE, x + 14, 473, 10, 1);
    noise([N, RD, YE, N], x + 14, 547, 14, 8, 0.75); noise([N, W], x + 29, 544, 6, 10, 0.5);
    noise([W], x + 2, 558, 20, 1, 0.6);
  };
  sect(1123, 0); sect(1170, 1);
  frame(M, 1165, 581, 54, 25, 2);
  px(C, 1168, 589, 35, 13); px(C, 1203, 589, 13, 7);
  noise([TE, N, W, GY], 1169, 590, 33, 11, 0.7); noise([TE, N, GY], 1203, 590, 12, 5, 0.7);
  [1177, 1186, 1194].forEach((x) => px("#000", x, 590, 1, 12));
  return layers;
}
const DRAWING = buildDrawing();
const OUTLINE = "M0 4h8v-4h7v4h7v5h2v-5h7v-4h8v4h8v9h-4v2h-4v2h-8v-2h-15v2h-8v-4h-8z";
const OUTLINE_LOW = "M0 4h11v-3h6v3h8v3h1v-3h5v-2h3v-1h7v3h9v10h-9v2h-3v1h-3v-3h-16v2h-3v1h-3v-4h-9v-5h-4z";

function Drawing() {
  return (
    <svg className="absolute left-0 top-0" width="1589" height="602" viewBox="96 186 1589 602" fill="none" aria-hidden="true">
      <g shapeRendering="crispEdges">
        {DRAWING.map((l, i) => <path key={i} d={l.d.join("")} fill={l.c} />)}
        <path d={OUTLINE} transform="translate(615.5 260.500)" stroke="#008f8f" />
        <g stroke="#f0f">
          <path d={OUTLINE} transform="translate(544.5 410.500)" />
          <path d={OUTLINE_LOW} transform="translate(544.5 567.500)" />
          <path d={OUTLINE_LOW} transform="translate(544.5 613.500)" />
          <path d="M537.500 526.500h8v-3h7v3h17v-3h6v3h2l1-9 8 1-4 24-5-1v-2h-1v-1h-8v-4h-15v4h-8v-2h-8zM561 526v5" />
          <path d="M551.500 366.500h7v4h-2v3h-3v-3h-2zM575.500 366.500h7v4h-2v3h-3v-3h-2z" />
        </g>
        <g stroke="#fff">
          <path d="M165.500 708.500h10v10h-10zM170.500 708V642M176 713.500h66M283.500 191.500h6v6h-6z" />
        </g>
      </g>
      <path d="M165.500 650l5-9 5 9M234 708.500l9 5-9 5" stroke="#fff" />
      <path d="M288 196v13l3-2 3 5 2-1-2-6h4z" fill="#fff" />
      <g fill="#fff" fontFamily="Open Sans, sans-serif" fontWeight="300">
        <text x="166" y="638" fontSize="17">Y</text>
        <text x="248" y="720" fontSize="18">X</text>
      </g>
    </svg>
  );
}

const polar = (r, deg) => [74 + r * Math.sin((deg * Math.PI) / 180), 74 - r * Math.cos((deg * Math.PI) / 180)];
function Wheel() {
  return (
    <svg width="148" height="148" viewBox="0 0 148 148" fill="none" role="img" aria-label="View navigator">
      <circle cx="74" cy="74" r="59" stroke="#6b6c6e" strokeWidth="30" />
      {[0, 1, 2, 3, 4, 5, 6, 7].map((i) => {
        const a = polar(42, 22.5 + i * 45);
        const b = polar(76, 22.5 + i * 45);
        return <path key={i} d={`M${a[0]} ${a[1]}L${b[0]} ${b[1]}`} stroke="#000" strokeWidth="3.500" />;
      })}
      <path d="M40 73a34 34 0 0 1 68 0" stroke="#00566f" strokeWidth="13" />
      <path d="M40 76a34 34 0 0 0 68 0" stroke="#6b6c6e" strokeWidth="13" />
      <path d="M60 67l7-6h20l-6 6z" fill="#777" />
      <path d="M60 67h21v21H60zM60 67l7-6h20v21l-6 6M81 67l6-6M67 61v21h20M60 88l7-6" stroke="#858585" strokeWidth="1.500" />
    </svg>
  );
}

const NavButton = ({ label, children }) => (
  <button type="button" aria-label={label} className="flex h-[26px] w-[26px] items-center justify-center border border-[#7d7d7d] bg-[#6c6c6c] text-[12px] leading-4 text-[#2c2c2c]">{children}</button>
);

const MENUS = ["文件(F)", "编辑(E)", "视图(V)", "插入(I)", "格式(O)", "尺寸(N)", "绘制(D)", "修改(M)", "限制(C)", "工具(T)", "实体(S)", "窗口(W)", "说明(H)", "插件"];
const TOGGLES = [["锁点", 0], ["网格", 0], ["正交", 1], ["极性", 0], ["图元抓取", 1], ["图元追踪", 1], ["快速输入", 1], ["循环选择", 1], ["线宽", 0], ["模型", 1], ["动态 CCS", 1], ["AMonitor", 0]];
const LOG = ["以 [@EXTFONT2.SHX] 替换 [china]", "没有找到文件 - hztxtb.shx", "以 [@EXTFONT2.SHX] 替换 [hztxtb.shx]", ": 开启“R2000”工程图形文件案"];
const COL1 = "erase dup copyE mirror move offset array rotate scale stretch editC chamf fillet spl1 spl2 weld trim scis ext brk hEdit front pEdit swap blueB aB align handS".split(" ");
const COL2 = "trk mid2 | int1 int2 endp midp near | cen quad tan node ins from par prp | app none | snap |".split(" ");
const COL3 = "line xline hex rec arc3 pl cir ell earc pts stair brkl hatch aNew ring mtext text cldG cldR cldE cldF spl spf handS cldB".split(" ");

const renderRow = (names) =>
  names.split(" ").map((n, i) => (n === "|" ? <Sep key={i} /> : n === ":" ? <Grip key={i} /> : n === "v" ? <Drop key={i} /> : <Tool key={i} name={n} />));

const VBar = ({ names, label, more, size }) => (
  <div role="toolbar" aria-label={label} className="flex w-[31px] shrink-0 flex-col items-center border-r border-[#a6a6a6]">
    <div className="mb-1 mt-1 w-6 border-t-2 border-dotted border-[#bdbdbd]" />
    {names.map((n, i) => (n === "|" ? <div key={i} className="my-[2px] h-[2px] w-[23px] shrink-0 border-t border-[#8c8c8c]" /> : <VTool key={i} name={n} size={size} />))}
    {more && <span className="mt-auto rotate-90 pb-1 text-[12px] leading-4 text-[#444]">»</span>}
  </div>
);

const Glyph = ({ d, label }) => (
  <button type="button" aria-label={label} className="flex h-4 w-4 items-center justify-center">
    <svg width="12" height="12" viewBox="0 0 12 12" fill="none"><path d={d} stroke="#000" strokeWidth="1.500" /></svg>
  </button>
);
const G_MIN = "M3 9h6";
const G_MAX = "M2 1.500h8v9H2zM2 2.500h8";
const G_REST = "M4 4V1.500h6.500V7H8M1.500 4.500H8v5.500H1.500zM1.500 5.500H8";
const G_X = "M2 2l8 8M10 2l-8 8";

export default function App() {
  return (
    <div className="relative flex h-screen min-h-[930px] flex-col overflow-hidden border border-[#27437f] bg-[#f0f0f0] font-[family-name:'Noto_Sans','Noto_Sans_CJK_SC',sans-serif] text-[12px] leading-4 text-[#222]">
      <header className="flex h-[66px] shrink-0 border-b-2 border-white">
        <div className="flex w-[45px] shrink-0 justify-center pt-[13px]">
          <svg width="26" height="36" viewBox="0 0 26 36" role="img" aria-label="CorelCAD">
            <path d="M13 1C5 1 1 6 1 12c0 7 6 11 9 18h6c3-7 9-11 9-18C25 6 21 1 13 1z" fill="#8b8b8b" />
            <path d="M8 3C4 10 5 19 11 30M18 3c4 7 3 16-3 27" stroke="#ededed" strokeWidth="2" fill="none" />
            <path d="M13 1c-5 7-4 19-1 29h2c3-10 4-22-1-29z" fill="#c9c9c9" />
            <path d="M13 1v29M4 5C1 12 4 20 10 29M22 5c3 7 0 15-6 24" stroke="#4f4f4f" strokeWidth="1.500" fill="none" />
            <path d="M11 32h4v3h-4z" fill="#c01020" />
          </svg>
        </div>
        <div className="flex min-w-0 flex-1 flex-col">
          <div className="flex h-[43px] items-center">
            <Combo label="工作空间" value="典型" className="h-[23px] w-[182px]" />
            <div className="flex items-center">
              {renderRow("new open openBlue save print undo v redo v")}
              <button type="button" aria-label="customize" className="ml-1">
                <svg width="6" height="8" viewBox="0 0 6 8"><path d="M0 0h6v2H0zM0 4h6L3 8z" fill="#21437f" /></svg>
              </button>
            </div>
            <h1 className="ml-[178px] truncate pt-1 text-[15px] font-light leading-6 text-[#333]">CorelCAD 2023™ - [D:\Program Files\GONGJU\杂项\8#施工图cad示范图.dwg]</h1>
            <div className="ml-auto flex gap-[6px] pr-[5px]">
              <Glyph label="minimize" d={G_MIN} /><Glyph label="maximize" d={G_MAX} /><Glyph label="close" d={G_X} />
            </div>
          </div>
          <div className="flex items-start">
            <nav className="flex gap-[18px] pl-[9px] pt-[3px]">
              {MENUS.map((m) => <button type="button" key={m} className="whitespace-nowrap">{m}</button>)}
            </nav>
            <div className="ml-auto flex gap-[3px] pr-[4px]">
              <Glyph label="minimize drawing" d={G_MIN} /><Glyph label="restore drawing" d={G_REST} /><Glyph label="close drawing" d={G_X} />
            </div>
          </div>
        </div>
      </header>

      <div role="toolbar" aria-label="标准" className="flex h-[30px] shrink-0 items-center border-b border-[#a6a6a6] pl-[5px]">
        {renderRow(": new open save | print printSet preview printBrush cut copy paste match | undo v redo v | pan zoomDyn zoomWin | props find |")}
      </div>
      <div role="toolbar" aria-label="图层" className="flex h-[30px] shrink-0 items-center border-b border-[#a6a6a6] pl-[5px]">
        <Grip />
        <Tool name="layers" />
        <Combo label="图层" value="SURFACE" className="h-[21px] w-[299px]">
          <svg width="64" height="16" viewBox="0 0 64 16" className="ml-1 shrink-0" aria-hidden="true">
            <circle cx="7" cy="8" r="5.500" fill="#31a52e" stroke="#1d631c" />
            <path d="M23 3q8 10 0 10t0-10z" fill="#0c7cc8" stroke="#123" strokeWidth=".6" />
            <path d="M35 9V5q0-2 2-2t2 2v3" stroke="#222" fill="none" /><path d="M38 8h6v5h-6z" fill="#222" />
            <circle cx="55" cy="8" r="6" fill="#f0f" stroke="#505" />
          </svg>
        </Combo>
        <Tool name="layerState" />
        <Sep />
        <Combo label="图层状态" value="未保存的图层状态" className="h-[21px] w-[301px]" />
        <Sep /><Grip />
        <Combo label="线色" value="ByLayer" className="h-[21px] w-[131px]">
          <svg width="14" height="12" viewBox="0 0 14 12" className="ml-1 shrink-0" aria-hidden="true"><circle cx="7" cy="6" r="5" fill="#f0f" stroke="#505" /></svg>
        </Combo>
        <Sep />
        <Combo label="线型" value={"CONTINOUS\u00a0\u00a0\u00a0\u00a0Solid"} className="h-[21px] w-[133px]" />
        <Sep />
        <Combo label="线宽" value="ByLayer" className="h-[21px] w-[133px]">
          <div className="ml-1 h-px w-8 shrink-0 bg-black" />
        </Combo>
        <Sep />
        <Combo label="打印样式" value="" disabled className="h-[21px] w-[131px]" />
      </div>
      <div role="toolbar" aria-label="约束" className="flex h-[30px] shrink-0 items-center border-b-2 border-[#a0a0a0] pl-[5px]">
        {renderRow(": block lock parH parV diag perp tang smooth sym conc mirr eq | : dimA dimH dimV dimR dimD dimG dimZ | : cH cG cS dU | dH dG dS | xDel xSet xInf")}
      </div>

      <div className="flex min-h-0 flex-1 px-[2px]">
        <VBar names={COL1} label="修改" more />
        <VBar names={COL2} label="图元抓取" size={20} />
        <VBar names={COL3} label="绘制" />
        <main className="flex min-w-0 flex-1 flex-col">
          <div className="flex h-[29px] shrink-0 border-b border-[#8c8c8c] bg-white">
            <div role="tablist" className="flex h-6 flex-1 border-b border-[#b0b0b0] bg-[#ededef]">
              <div className="flex w-[218px] items-center border-r border-[#d0d0d0] bg-[#f2f2f2] pr-3 pt-px">
                <button type="button" role="tab" aria-selected="false" className="flex-1 pl-3 text-center text-black">NONAME_0.dwg</button>
                <button type="button" aria-label="close NONAME_0.dwg"><svg width="12" height="12" viewBox="0 0 12 12"><path d="M1 1l10 10M11 1L1 11" stroke="#222" /></svg></button>
              </div>
              <div className="flex h-[25px] w-[217px] items-center bg-white pr-[10px]">
                <button type="button" role="tab" aria-selected="true" className="flex-1 pl-2 text-center text-black">8#施工图cad示范图.dwg</button>
                <button type="button" aria-label="close 8#"><svg width="12" height="12" viewBox="0 0 12 12"><path d="M1 1l10 10M11 1L1 11" stroke="#222" /></svg></button>
              </div>
              <button type="button" aria-label="new tab" className="ml-[3px] mt-px flex h-[21px] w-[25px] items-center justify-center rounded border border-[#c8c8c8] bg-white">
                <svg width="14" height="14" viewBox="0 0 14 14"><path d="M7 1v12M1 7h12" stroke="#333" strokeWidth="1.500" /></svg>
              </button>
            </div>
          </div>
          <section aria-label="drawing" className="relative min-h-0 flex-1 overflow-hidden bg-black">
            <Drawing />
            <div className="absolute right-[10px] top-[10px] flex gap-[11px]">
              <Wheel />
              <div className="flex flex-col gap-[5px]">
                <NavButton label="home"><svg width="18" height="18" viewBox="0 0 18 18"><path d="M4 8v8h10V8L9 3z" fill="#8d979e" stroke="#333" /><path d="M1 9l8-7 8 7" fill="none" stroke="#444" /></svg></NavButton>
                <NavButton label="rotate left"><svg width="18" height="18" viewBox="0 0 18 18" fill="none"><path d="M7 3a7 7 0 1 1-3 10" stroke="#4d7388" strokeWidth="1.500" /><path d="M0 6l5-3v6z" fill="#2583b3" /></svg></NavButton>
                <NavButton label="90">90</NavButton>
                <NavButton label="rotate right"><svg width="18" height="18" viewBox="0 0 18 18" fill="none"><path d="M11 3a7 7 0 1 0 3 10" stroke="#4d7388" strokeWidth="1.500" /><path d="M18 6l-5-3v6z" fill="#2583b3" /></svg></NavButton>
                <NavButton label="view cube"><svg width="14" height="14" viewBox="0 0 14 14"><path d="M3 1h9l-2 12H2z" fill="#2d2d2d" /></svg></NavButton>
              </div>
            </div>
          </section>
          <div role="tablist" className="flex h-[19px] shrink-0">
            <button type="button" role="tab" aria-selected="true" className="relative h-4 w-[47px] font-bold text-black">
              <svg className="absolute inset-0" width="48" height="16" viewBox="0 0 48 16"><path d="M0 0l6 13q1 2 3 2h30q2 0 3-2l5-13" fill="#fff" stroke="#222" /></svg>
              <span className="relative">模型</span>
            </button>
            <button type="button" role="tab" aria-selected="false" className="relative h-4 w-[57px] text-black">
              <svg className="absolute inset-0" width="57" height="16" viewBox="0 0 57 16"><path d="M1 0l5 13q1 2 3 2h39q2 0 3-2l5-13" fill="#c4c4c4" stroke="#222" /></svg>
              <span className="relative">布局1</span>
            </button>
            <button type="button" aria-label="add layout" className="ml-[7px] mt-px flex h-[13px] w-[21px] items-center justify-center rounded border border-[#c8c8c8] bg-white">
              <svg width="9" height="9" viewBox="0 0 9 9"><path d="M4.500 0v9M0 4.500h9" stroke="#333" /></svg>
            </button>
          </div>
          <div className="flex h-[26px] shrink-0 items-center justify-between border-b-2 border-t-2 border-b-[#8c8c8c] border-t-[#707070] bg-[#c0c0c0] pl-[4px] pr-[3px]">
            <h2 className="pt-[2px] font-bold text-[#111]">指令窗口</h2>
            <div className="flex gap-[6px]"><Glyph label="float" d={G_REST} /><Glyph label="close panel" d={G_X} /></div>
          </div>
          <div className="flex h-[71px] shrink-0 overflow-hidden border-b border-[#a6a6a6] bg-white">
            <div className="flex flex-1 flex-col justify-end pb-[5px] pl-[5px] font-[family-name:'Liberation_Sans','Noto_Sans_CJK_SC',sans-serif] text-[13px] leading-[17px] text-[#222]">
              {LOG.map((l, i) => <p key={i} className="whitespace-pre">{l}</p>)}
            </div>
            <div className="flex w-[18px] flex-col items-center bg-[#f0f0f0] py-[6px]">
              <svg width="10" height="6" viewBox="0 0 10 6"><path d="M0 6h10L5 0z" fill="#111" /></svg>
              <div className="mb-1 mt-auto h-[9px] w-[14px] bg-[#cdcdcd]" />
              <svg width="10" height="6" viewBox="0 0 10 6" className="mt-1"><path d="M0 0h10L5 6z" fill="#111" /></svg>
            </div>
          </div>
          <label className="flex h-[15px] shrink-0 items-center bg-white pl-[5px] font-[family-name:'Liberation_Sans',sans-serif] text-[13px] leading-[15px]">
            :<input aria-label="指令" className="h-full flex-1 outline-none" />
          </label>
        </main>
      </div>

      <footer className="flex h-[33px] shrink-0 items-center border-t border-[#d8d8d8] pl-1">
        <p className="w-[439px] shrink-0 text-[#333]">CorelCAD 2023™ x64</p>
        <div className="flex gap-[7px]">
          {TOGGLES.map(([t, on]) => (
            <button type="button" key={t} aria-pressed={!!on} className={`h-5 shrink-0 whitespace-nowrap rounded border px-[6px] leading-[18px] ${on ? "border-[#1565a5] bg-[#cbe3f5] text-[#111]" : "border-[#d2d2d2] bg-[#fdfdfd]"}`}>{t}</button>
          ))}
        </div>
        <div className="relative ml-[10px] flex h-5 w-[60px] items-center rounded border border-[#d2d2d2] bg-[#fdfdfd]">
          <select aria-label="注记" className="h-full w-full appearance-none bg-transparent pl-1 outline-none"><option>注记</option></select>
          <svg className="pointer-events-none absolute right-1" width="12" height="9" viewBox="0 0 12 9"><path d="M0 0h12L6 9z" fill="#111" /></svg>
        </div>
        <span className="ml-[7px]">(1:1)</span>
        <span className="ml-2">(-258708,254093,0)</span>
      </footer>

      <svg className="pointer-events-none absolute left-0 top-0 overflow-hidden" width="1687" height="951" viewBox="1 1 1687 951" fontFamily="Lato, sans-serif" fontWeight="900" fontSize="60">
        <text transform="translate(336 652) rotate(24.5)" fill="#fff" fillOpacity=".7">MacXF.com</text>
        <text transform="translate(779 -31) rotate(24.5)" fill="#fff" fillOpacity=".85" stroke="#d0d0d0" strokeWidth="1">MacXF.com</text>
        <text transform="translate(1587 313) rotate(24.5)" fill="#fff" fillOpacity=".75">MacXF.com</text>
      </svg>
    </div>
  );
}
